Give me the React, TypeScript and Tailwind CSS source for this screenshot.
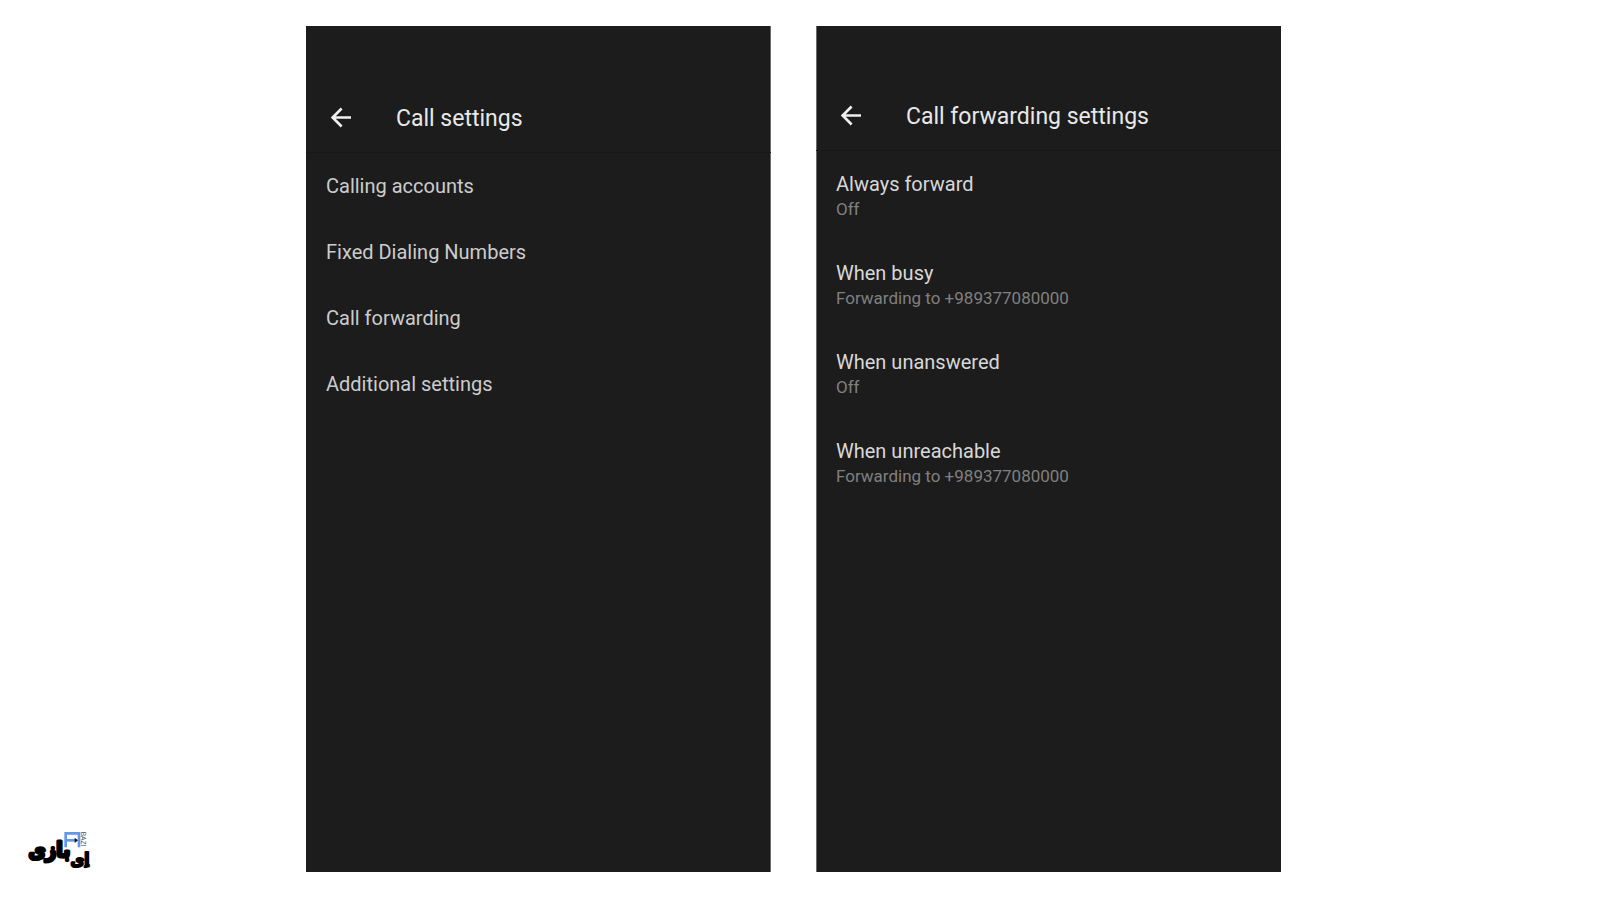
import type { ReactNode } from "react";

type Setting = {
  label: string;
  value?: string;
};

const callSettings: Setting[] = [
  { label: "Calling accounts" },
  { label: "Fixed Dialing Numbers" },
  { label: "Call forwarding" },
  { label: "Additional settings" },
];

const forwardingSettings: Setting[] = [
  { label: "Always forward", value: "Off" },
  { label: "When busy", value: "Forwarding to +989377080000" },
  { label: "When unanswered", value: "Off" },
  { label: "When unreachable", value: "Forwarding to +989377080000" },
];

function BackIcon() {
  return (
    <svg
      viewBox="0 0 24 24"
      className="size-6"
      fill="none"
      stroke="currentColor"
      strokeWidth="2.6"
      aria-hidden="true"
    >
      <path d="M22 11.5H3.5M12.6 2.5l-9 9 9 9" />
    </svg>
  );
}

function Logo() {
  return (
    <svg viewBox="0 0 240 156" className="h-[52px] w-20" role="img" aria-label="ای بازی">
      <g fill="none" stroke="#6396e6" strokeWidth="8">
        <path d="M137 82V40h40v42" />
        <path d="M137 61h30" />
      </g>
      <path d="M164 53l10 8-10 8z" fill="#111" />
      <text
        transform="translate(184 35) rotate(90)"
        fontFamily="Liberation Sans, sans-serif"
        fontSize="20"
        fill="#555"
      >
        BAZI
      </text>
      <g
        fontFamily="DejaVu Sans Condensed, DejaVu Sans, sans-serif"
        fontWeight="700"
        fill="#000"
        stroke="#000"
        strokeLinejoin="round"
        textAnchor="middle"
        direction="rtl"
      >
        <text x="88" y="112" fontSize="62" strokeWidth="9">
          بازی
        </text>
        <text x="180" y="134" fontSize="50" strokeWidth="6">
          اِی
        </text>
      </g>
    </svg>
  );
}

function Screen({
  title,
  headerClass,
  className,
  children,
}: {
  title: string;
  headerClass: string;
  className: string;
  children: ReactNode;
}) {
  return (
    <section className={`bg-[#1c1c1c] ${className}`}>
      <header className={`border-b border-[#181818] pb-1.5 ${headerClass}`}>
        <div className="flex h-14 items-center gap-[43px] pl-[23px]">
          <button type="button" aria-label="Back" className="text-[#f0f0f0]">
            <BackIcon />
          </button>
          <h1 className="pt-0.5 text-[23px] leading-7 text-[#e8e8e8]">{title}</h1>
        </div>
      </header>
      {children}
    </section>
  );
}

export default function App() {
  return (
    <main className="grid min-h-screen grid-cols-[306fr_465fr_45fr_465fr_319fr] bg-white pt-[26px] pb-7 font-['Roboto',sans-serif]">
      <div className="flex flex-col justify-end pl-5">
        <Logo />
      </div>

      <Screen
        title="Call settings"
        headerClass="pt-16"
        className="shadow-[inset_-1px_0_#6a6a6a]"
      >
        <ul>
          {callSettings.map((s) => (
            <li key={s.label}>
              <button
                type="button"
                className="flex h-[66px] w-full items-center px-5 text-left text-xl text-[#cccccc]"
              >
                {s.label}
              </button>
            </li>
          ))}
        </ul>
      </Screen>

      <Screen
        title="Call forwarding settings"
        headerClass="pt-[62px]"
        className="col-start-4 shadow-[inset_1px_0_#6a6a6a]"
      >
        <ul>
          {forwardingSettings.map((s) => (
            <li key={s.label}>
              <button type="button" className="block w-full px-5 pt-5 pb-[19px] text-left">
                <span className="block text-xl leading-[26px] text-[#d8d8d8]">{s.label}</span>
                <span className="block text-[17px] leading-6 text-[#808080]">{s.value}</span>
              </button>
            </li>
          ))}
        </ul>
      </Screen>
    </main>
  );
}
